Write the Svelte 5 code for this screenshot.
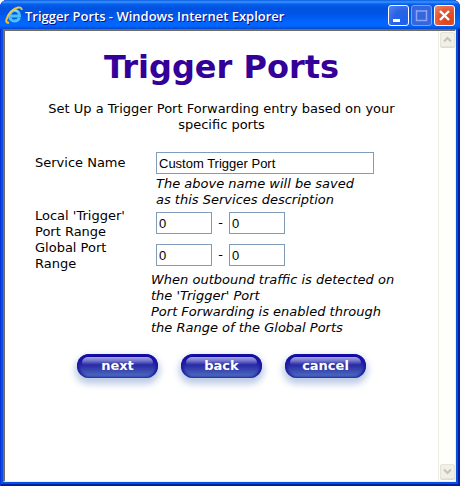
<script>
    let serviceName = "Custom Trigger Port"

    /**
     * @type {{ id: string, label: string, from: string, to: string }[]}
     */
    let ranges = [
        { id: "local", label: "Local 'Trigger' Port Range", from: "0", to: "0" },
        { id: "global", label: "Global Port Range", from: "0", to: "0" },
    ]

    const actions = ["next", "back", "cancel"]
</script>

<div class="window">
    <header class="titlebar">
        <svg class="logo" viewBox="0 0 18 18" aria-hidden="true">
            <path d="M14.500 11.800C13.300 14.200 11.500 15 9.500 15 6.500 15 4.700 12.700 4.700 9.900 4.700 6.800 6.900 4.600 9.700 4.600c3.200 0 4.900 2.200 4.800 5.400H6" fill="none" stroke="#4fc0f2" stroke-width="3" />
            <path d="M5 8c.8-2.400 2.600-3.600 4.700-3.600 1.800 0 3 .7 3.800 1.800" fill="none" stroke="#b5edff" stroke-width="1" />
            <path d="M4 16.500C-.5 18 1 11 5.800 6 10.600 1.300 16.500-.5 16.800 4" fill="none" stroke="#f4c537" stroke-width="2" />
        </svg>
        <h1>Trigger Ports - Windows Internet Explorer</h1>
        <div class="controls">
            <button class="control" aria-label="Minimize">
                <svg viewBox="0 0 21 21"><path d="M5 15.500h7" stroke="#fff" stroke-width="3" /></svg>
            </button>
            <button class="control maximize" aria-label="Maximize" disabled>
                <svg viewBox="0 0 21 21"><path d="M5.500 5v10.500h10V5M5 6h11" fill="none" stroke="#8ba5f1" stroke-width="1.500" /></svg>
            </button>
            <button class="control close" aria-label="Close">
                <svg viewBox="0 0 21 21"><path d="M6 6l9 9M15 6l-9 9" stroke="#fff" stroke-width="2.400" /></svg>
            </button>
        </div>
    </header>

    <div class="view">
        <main>
            <h2>Trigger Ports</h2>
            <p class="intro">Set Up a Trigger Port Forwarding entry based on your specific ports</p>

            <form on:submit|preventDefault>
                <div class="row">
                    <label for="service">Service Name</label>
                    <input id="service" type="text" bind:value={serviceName} />
                </div>
                <p class="hint">The above name will be saved<br />as this Services description</p>
                {#each ranges as range}
                    <div class="row">
                        <label for="{range.id}-from">{range.label}</label>
                        <div class="range">
                            <input id="{range.id}-from" type="text" bind:value={range.from} />
                            <span>-</span>
                            <input type="text" aria-label="{range.label} end" bind:value={range.to} />
                        </div>
                    </div>
                {/each}
                <p class="note">
                    When outbound traffic is detected on<br />the 'Trigger' Port<br />
                    Port Forwarding is enabled through<br />the Range of the Global Ports
                </p>
                <div class="actions">
                    {#each actions as action}
                        <button type="button" class="pill"><span>{action}</span></button>
                    {/each}
                </div>
            </form>
        </main>

        <div class="scrollbar">
            <button aria-label="Scroll up" disabled>
                <svg viewBox="0 0 9 7"><path d="M1 5.500l3.500-3.500L8 5.500" /></svg>
            </button>
            <button aria-label="Scroll down" disabled>
                <svg viewBox="0 0 9 7"><path d="M1 1.500l3.500 3.500L8 1.500" /></svg>
            </button>
        </div>
    </div>
</div>

<style>
    :global(body) {
        margin: 0;
        background: #fff;
    }
    .window {
        box-sizing: border-box;
        min-height: 100vh;
        display: flex;
        flex-direction: column;
        padding: 0 4px 4px 3px;
        border-radius: 7px 7px 0 0;
        background: #0a50e0;
        box-shadow: inset 1px 0 #0831d9, inset -2px 0 #001ea0, inset 0 -2px #001ea0;
        font-family: Verdana, "DejaVu Sans", sans-serif;
        font-size: 13px;
        line-height: 16px;
        color: #000;
    }
    .titlebar {
        display: flex;
        align-items: center;
        height: 29px;
        margin: 0 -4px 0 -3px;
        padding: 0 5px;
        border-radius: 7px 7px 0 0;
        background: linear-gradient(#0a5be0, #3a93ff 2px, #0660ee 4px, #0053e0 8px, #0055e8 14px, #0066ff 22px, #0066ff 26px, #0048d4);
    }
    .logo {
        width: 18px;
        height: 18px;
        margin-right: 2px;
    }
    h1 {
        flex: 1;
        margin: 0;
        padding-top: 2px;
        font-family: "Trebuchet MS", "Open Sans", sans-serif;
        font-size: 13px;
        font-weight: 600;
        color: #fff;
        text-shadow: 1px 1px #0f1089;
        white-space: nowrap;
    }
    .controls {
        display: flex;
        gap: 2px;
        padding-top: 2px;
    }
    .control {
        width: 21px;
        height: 21px;
        padding: 0;
        border: 1px solid #fff;
        border-radius: 3px;
        background: radial-gradient(circle at 80% 80%, #1b62f0, #2a62e4 50%, #5585ef);
    }
    .control svg {
        display: block;
        margin: -1px;
        width: 21px;
        height: 21px;
    }
    .control.maximize {
        border-color: #7d9ff3;
        background: #3466e2;
    }
    .control.close {
        background: radial-gradient(circle at 70% 75%, #dd4318, #e25430 50%, #ee8a70);
    }

    /* Page area */
    .view {
        flex: 1;
        display: flex;
        border: 1px solid #f1efe2;
        border-top: 2px solid #716f64;
        border-left: 2px solid #716f64;
        background: #fff;
    }
    main {
        flex: 1;
        padding: 16px 30px 0;
    }
    h2 {
        margin: 0 0 14px;
        font-size: 32px;
        line-height: 40px;
        text-align: center;
        color: #309;
    }
    .intro {
        margin: 0 0 19px;
        text-align: center;
    }
    .row {
        display: grid;
        grid-template-columns: 105px 1fr;
        column-gap: 16px;
        align-items: center;
    }
    input {
        box-sizing: border-box;
        width: 56px;
        height: 22px;
        padding: 0 2px;
        border: 1px solid #7f9db9;
        background: #fff;
        font-family: Arial, "Liberation Sans", sans-serif;
        font-size: 13px;
        color: #000;
    }
    #service {
        width: 218px;
    }
    .range {
        display: flex;
        align-items: center;
        margin-top: -2px;
    }
    .range span {
        width: 17px;
        text-align: center;
    }
    .hint,
    .note {
        margin: 0;
        font-style: italic;
        white-space: nowrap;
    }
    .hint {
        padding: 2px 0 0 121px;
    }
    .note {
        padding-left: 116px;
    }

    /* Glossy buttons */
    .actions {
        display: flex;
        justify-content: center;
        gap: 23px;
        margin-top: 18px;
    }
    .pill {
        position: relative;
        width: 81px;
        height: 24px;
        padding: 0 0 1px;
        border: 0;
        border-radius: 12px;
        background: linear-gradient(#1209a6 3px, #2a2aa6 11px, #4a6abc 22px);
        box-shadow: inset 2px 0 3px #1b15a0, inset -2px 0 3px #1b15a0, 0 4px 7px 2px #bccbe5;
        font-family: Verdana, "DejaVu Sans", sans-serif;
        font-size: 13px;
        font-weight: bold;
        color: #fff;
    }
    .pill::before {
        content: "";
        position: absolute;
        top: 3px;
        left: 5px;
        right: 5px;
        height: 8px;
        border-radius: 7px 7px 3px 3px;
        background: linear-gradient(#a3a6e4, #7074ca 50%, transparent);
    }
    .pill span {
        position: relative;
    }

    .scrollbar {
        display: flex;
        flex-direction: column;
        justify-content: space-between;
        box-sizing: border-box;
        width: 17px;
        padding: 1px 1px 2px;
        border-left: 1px solid #eeede5;
        background: #fefefb;
    }
    .scrollbar button {
        width: 15px;
        height: 15px;
        padding: 0;
        border: 1px solid #e6e4d8;
        border-radius: 2px;
        background: #f1f0e8;
        box-shadow: 0 1px #dddccf;
    }
    .scrollbar svg {
        display: block;
        width: 9px;
        height: 7px;
        margin: 0 auto;
    }
    .scrollbar path {
        fill: none;
        stroke: #c6c4b8;
        stroke-width: 2;
    }
</style>
